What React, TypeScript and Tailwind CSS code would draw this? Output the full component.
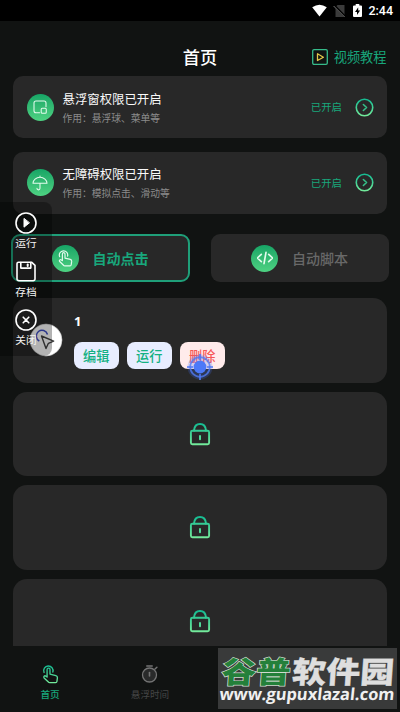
import React from "react";

function Gradient({ id }: { id: string }) {
  return (
    <defs>
      <linearGradient id={id} x1="0" y1="0" x2="0" y2="24" gradientUnits="userSpaceOnUse">
        <stop offset="0.1" stopColor="#17bd92" />
        <stop offset="0.95" stopColor="#74eb9b" />
      </linearGradient>
    </defs>
  );
}

const tapPaths = (
  <>
    <path d="M4.9 10.2a5.600 5.600 0 1 1 10.500-.6" />
    <path d="M8.500 15.600V6.700a1.750 1.750 0 0 1 3.500 0v5.400l7 1.800a2.500 2.500 0 0 1 1.900 2.600L20.300 21a1.600 1.600 0 0 1-1.600 1.400h-7a2 2 0 0 1-1.600-.7l-5.200-5a1.500 1.500 0 0 1 2-2.200z" />
  </>
);

function Badge({ children }: { children: React.ReactNode }) {
  return (
    <span className="flex h-[27px] w-[27px] shrink-0 items-center justify-center rounded-full bg-linear-to-b from-[#15a566] to-[#4dd282]">
      {children}
    </span>
  );
}

function BadgeIcon({ children, large = false }: { children: React.ReactNode; large?: boolean }) {
  return (
    <svg
      className={large ? "h-[18px] w-[18px]" : "h-[16px] w-[16px]"}
      viewBox="0 0 24 24"
      fill="none"
      stroke="#e3fbed"
      strokeWidth="1.600"
      strokeLinecap="round"
      strokeLinejoin="round"
    >
      {children}
    </svg>
  );
}

function Permission({ id, title, note, children }: { id: string; title: string; note: string; children: React.ReactNode }) {
  return (
    <section className="flex h-[62px] items-center rounded-[10px] bg-[#282828] pr-[13px] pl-[13.5px]">
      <Badge>{children}</Badge>
      <div className="ml-[9px] flex-1 pt-[2px]">
        <div className="text-[12.4px] leading-[18px] text-[#fafafa]">{title}</div>
        <div className="mt-[1px] text-[9.75px] leading-[18px] text-[#8b8b8b]">{note}</div>
      </div>
      <span className="mr-[13px] text-[10.4px] text-[#18a77c]">已开启</span>
      <svg className="h-[19px] w-[19px]" viewBox="0 0 24 24" fill="none" strokeWidth="2" strokeLinecap="round" strokeLinejoin="round">
        <Gradient id={id} />
        <circle cx="12" cy="12" r="10.4" stroke={`url(#${id})`} />
        <path d="M10.6 8.2 14.6 12l-4 3.8" stroke="#35bf87" />
      </svg>
    </section>
  );
}

function LockedSlot({ id }: { id: string }) {
  return (
    <div className="flex h-[84.5px] shrink-0 items-center justify-center rounded-[14px] bg-[#282828]">
      <svg className="h-[24px] w-[24px]" viewBox="0 0 24 24" fill="none" strokeWidth="1.900" strokeLinejoin="round" strokeLinecap="round">
        <Gradient id={id} />
        <g stroke={`url(#${id})`}>
          <rect x="2.900" y="8.800" width="18.200" height="13.400" rx="1.500" />
          <path d="M6 8.600C6.300 4.300 8.700 2 12 2s5.700 2.300 6 6.600" />
        </g>
        <path d="M12 14v3.200" stroke="#4fd897" strokeWidth="2" />
      </svg>
    </div>
  );
}

function StatusBar() {
  return (
    <div className="flex h-[21px] items-center bg-black pr-[7px]">
      <svg className="ml-auto h-[13px] w-[15px]" viewBox="0 0 15 13">
        <path d="M.2 3.3Q7.5-2 14.8 3.3L7.5 12.6z" fill="#fff" />
      </svg>
      <svg className="ml-[6px] h-[14px] w-[13px]" viewBox="0 0 13 14">
        <path d="M4.500 1h7v12h-9V3z" fill="#3b3b3b" />
        <path d="M1.200 1.500 12.400 13" stroke="#000" strokeWidth="2.4" />
        <path d="M.6 2 11.6 13" stroke="#777" strokeWidth="1" />
      </svg>
      <svg className="ml-[7px] h-[13px] w-[9px]" viewBox="0 0 9 13">
        <path d="M2.7 0h3.6v1.4H8q1 0 1 1V12q0 1-1 1H1q-1 0-1-1V2.400q0-1 1-1h1.700z" fill="#fff" />
        <path d="M5.200 3.300 2 8h2v3l3.100-4.500H5.200z" fill="#000" />
      </svg>
      <span className="ml-[6px] pt-[2px] font-[Roboto,sans-serif] text-[12.5px] leading-none font-medium text-white">2:44</span>
    </div>
  );
}

function FloatingMenu() {
  const items = [
    {
      label: "运行",
      icon: (
        <>
          <circle cx="11" cy="11" r="10" />
          <path d="M9 6.800v8.400l5.200-4.200z" fill="#fff" strokeWidth="1" />
        </>
      ),
    },
    {
      label: "存档",
      icon: (
        <>
          <path d="M3.500 1.300h13.300l3.200 3V17.900a1.800 1.800 0 0 1-1.800 1.800H3.800A1.800 1.800 0 0 1 2 17.900V2.800a1.500 1.500 0 0 1 1.500-1.500z" />
          <path d="M5.800 1.500v5.600h10V1.500" />
          <path d="M12.700 3.500v1.400" strokeWidth="2" />
        </>
      ),
    },
    {
      label: "关闭",
      icon: (
        <>
          <circle cx="11" cy="11" r="10" />
          <path d="m8.200 8.200 5.600 5.600m0-5.600-5.600 5.600" />
        </>
      ),
    },
  ];
  return (
    <aside className="absolute top-[202px] left-0 flex h-[154px] w-[52px] flex-col items-center gap-[10.500px] rounded-r-[8px] bg-black/30 pt-[10px]">
      {items.map((item) => (
        <div key={item.label} className="flex h-[38px] flex-col items-center">
          <svg className="h-[22px] w-[22px] shrink-0" viewBox="0 0 22 22" fill="none" stroke="#fff" strokeWidth="1.600" strokeLinejoin="round" strokeLinecap="round">
            {item.icon}
          </svg>
          <span className="text-[10.700px] leading-[18px] text-[#f3f3f3]">{item.label}</span>
        </div>
      ))}
    </aside>
  );
}

function Watermark() {
  return (
    <div className="absolute top-[648px] left-[218px] h-[61px] w-[179px] bg-[#393a3a]">
      <svg className="block h-full w-full" viewBox="0 0 179 61">
        <g fontFamily="'Noto Sans CJK SC', sans-serif" fontWeight="900" fontSize="34">
          <text x="0" y="0" textLength="69" lengthAdjust="spacingAndGlyphs" fill="#24803a" stroke="#cfdacf" strokeWidth="1.600" paintOrder="stroke" transform="translate(3 35.300) skewX(-4) scale(1 .88)">谷普</text>
          <text x="0" y="0" textLength="102" lengthAdjust="spacingAndGlyphs" fill="#dedede" stroke="#dedede" strokeWidth=".4" transform="translate(73.500 35.300) skewX(-4) scale(1 .88)">软件园</text>
        </g>
        <text x="0" y="0" textLength="175" lengthAdjust="spacingAndGlyphs" fill="#f0f0f0" fontFamily="'Open Sans', sans-serif" fontWeight="700" fontSize="16.500" transform="translate(1 51.500) skewX(-6)">www.gupuxlazal.com</text>
      </svg>
    </div>
  );
}

export default function App() {
  return (
    <div className="relative flex h-[712px] w-[400px] flex-col overflow-hidden bg-[#111312] font-['Noto_Sans_CJK_SC',sans-serif]">
      <StatusBar />
      <header className="grid h-[55px] grid-cols-3 items-center px-[13.500px] pt-[17px]">
        <span />
        <h1 className="text-center text-[17.200px] leading-[24px] font-medium text-white">首页</h1>
        <div className="flex items-center justify-end gap-[5.500px] text-[13.200px] leading-[20px] text-[#18a77c]">
          <svg className="h-[16px] w-[16px]" viewBox="0 0 16 16" fill="none" strokeWidth="1.300" strokeLinejoin="round">
            <rect x=".7" y=".7" width="14.600" height="14.600" rx="1.300" stroke="#36bb8a" />
            <path d="M5.500 4.800v6.700l5.900-3.300z" stroke="#e3c94a" />
          </svg>
          视频教程
        </div>
      </header>
      <div className="flex flex-col gap-[13.500px] px-[13px]">
        <Permission id="arrow-a" title="悬浮窗权限已开启" note="作用：悬浮球、菜单等">
          <BadgeIcon>
            <path d="M11.500 20.500H6a3 3 0 0 1-3-3V6a3 3 0 0 1 3-3h12a3 3 0 0 1 3 3v5.500" />
            <rect x="13.800" y="13.800" width="7.600" height="7.600" rx="1.500" />
          </BadgeIcon>
        </Permission>
        <Permission id="arrow-b" title="无障碍权限已开启" note="作用：模拟点击、滑动等">
          <BadgeIcon>
            <path d="M1.500 12.500a10.500 9 0 0 1 21 0zM12 3.500V1.500M12 12.500v7.500a2.300 2.300 0 0 1-4.600 0" />
          </BadgeIcon>
        </Permission>
      </div>
      <div className="mt-[20.500px] flex justify-between px-[11px]">
        <button className="flex h-[48px] w-[178.500px] items-center rounded-[9px] border-2 border-[#1f9f79] bg-[#282828] pl-[38.500px]">
          <Badge>
            <BadgeIcon large>{tapPaths}</BadgeIcon>
          </Badge>
          <span className="ml-[14px] text-[14px] font-bold text-[#18a77c]">自动点击</span>
        </button>
        <button className="flex h-[48px] w-[178.500px] items-center rounded-[9px] bg-[#282828] pl-[40.500px]">
          <Badge>
            <BadgeIcon>
              <path d="m6.500 6.500-6 5.500 6 5.500M17.500 6.500l6 5.500-6 5.500M13.500 3.500l-3 17" strokeWidth="2.500" />
            </BadgeIcon>
          </Badge>
          <span className="ml-[14px] text-[14px] font-medium text-[#696969]">自动脚本</span>
        </button>
      </div>
      <main className="mt-[16px] flex h-[347.500px] flex-col gap-[9px] overflow-hidden px-[13px]">
        <div className="h-[84.500px] shrink-0 rounded-[14px] bg-[#282828] pt-[13px] pl-[61px]">
          <div className="font-['Noto_Sans',sans-serif] text-[13px] leading-[20px] font-bold text-white">1</div>
          <div className="mt-[11px] flex gap-[8.500px] text-[13.200px] font-medium">
            <span className="flex h-[27px] w-[44.500px] items-center justify-center rounded-[8px] bg-[#e8edff] text-[#14b183]">编辑</span>
            <span className="flex h-[27px] w-[44.500px] items-center justify-center rounded-[8px] bg-[#e8edff] text-[#14b183]">运行</span>
            <span className="flex h-[27px] w-[44.500px] items-center justify-center rounded-[8px] bg-[#ffebeb] text-[#f65757]">删除</span>
          </div>
        </div>
        <LockedSlot id="lock-a" />
        <LockedSlot id="lock-b" />
        <LockedSlot id="lock-c" />
      </main>
      <nav className="grid grow grid-cols-4 pt-[18px] text-[9.600px] leading-[14px]">
        <div className="flex flex-col items-center gap-[3px] text-[#18a77c]">
          <svg className="h-[20px] w-[20px]" viewBox="0 0 24 24" fill="none" strokeWidth="1.600" strokeLinecap="round" strokeLinejoin="round">
            <Gradient id="nav-tap" />
            <g stroke="url(#nav-tap)">{tapPaths}</g>
          </svg>
          <span className="font-medium">首页</span>
        </div>
        <div className="flex flex-col items-center gap-[3px] text-[#454646]">
          <svg className="h-[20px] w-[20px]" viewBox="0 0 20 20" fill="none" stroke="#747474" strokeWidth="1.300" strokeLinecap="round">
            <circle cx="9.500" cy="11" r="7" fill="#292a2a" />
            <path d="M6.800 1.900h5.400M15 5l1.900-1.700" strokeWidth="1.500" />
            <path d="M9.500 8.500v3.500" strokeWidth="1.600" />
          </svg>
          <span>悬浮时间</span>
        </div>
      </nav>
      <svg className="absolute top-[323px] left-[29px] h-[34px] w-[34px]" viewBox="0 0 34 34">
        <circle cx="17" cy="17" r="16" fill="#fff" stroke="#c6c6c6" strokeWidth=".6" />
        <path d="M10.300 18a5.700 5.700 0 1 1 8.200-6.500" fill="none" stroke="#3e50c8" strokeWidth="1.500" />
        <path d="m12.500 13 4.500 12.500 2.400-5.200 5.300-2.200z" fill="none" stroke="#444" strokeWidth="1.400" strokeLinejoin="round" />
      </svg>
      <FloatingMenu />
      <svg className="absolute top-[353px] left-[186px] h-[28px] w-[28px]" viewBox="0 0 28 28">
        <circle cx="14" cy="14" r="12.500" fill="#3f6df5" fillOpacity=".22" />
        <circle cx="14" cy="14" r="9.800" fill="none" stroke="#4f7af5" strokeOpacity=".8" strokeWidth="1.700" />
        <circle cx="14" cy="14" r="6.400" fill="#4c79f8" />
        <path d="M14 1v6M14 21v6M1 14h6M21 14h6" stroke="#4f7af5" strokeWidth="1.600" />
      </svg>
      <Watermark />
    </div>
  );
}
